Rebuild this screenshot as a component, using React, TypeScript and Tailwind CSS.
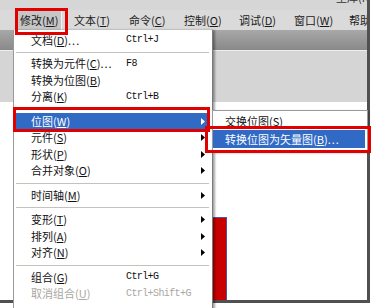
type Entry = {
  sep?: number;
  label?: string;
  k?: string;
  tail?: string;
  shortcut?: string;
  arrow?: boolean;
  active?: boolean;
  disabled?: boolean;
};

const menuItems: Entry[] = [
  { label: "文档", k: "D", tail: "...", shortcut: "Ctrl+J" },
  { sep: 7 },
  { label: "转换为元件", k: "C", tail: "...", shortcut: "F8" },
  { label: "转换为位图", k: "B" },
  { label: "分离", k: "K", shortcut: "Ctrl+B" },
  { sep: 8 },
  { label: "位图", k: "W", arrow: true, active: true },
  { label: "元件", k: "S", arrow: true },
  { label: "形状", k: "P", arrow: true },
  { label: "合并对象", k: "O", arrow: true },
  { sep: 8 },
  { label: "时间轴", k: "M", arrow: true },
  { sep: 8 },
  { label: "变形", k: "T", arrow: true },
  { label: "排列", k: "A", arrow: true },
  { label: "对齐", k: "N", arrow: true },
  { sep: 8 },
  { label: "组合", k: "G", shortcut: "Ctrl+G" },
  { label: "取消组合", k: "U", shortcut: "Ctrl+Shift+G", disabled: true },
];

const menuBar = [
  ["视图", "V"],
  ["修改", "M"],
  ["文本", "T"],
  ["命令", "C"],
  ["控制", "O"],
  ["调试", "D"],
  ["窗口", "W"],
  ["帮助", ""],
];

const Label = ({ label, k, tail }: { label: string; k?: string; tail?: string }) => (
  <span className="whitespace-nowrap">
    {label}
    {k && (
      <>
        (<span className="underline underline-offset-[1px]">{k}</span>)
      </>
    )}
    {tail && <span className="tracking-[1px]">{tail}</span>}
  </span>
);

const Arrow = ({ white }: { white?: boolean }) => (
  <svg width="4" height="7" viewBox="0 0 4 7" className="shrink-0">
    <polygon points="0,0 4,3.5 0,7" fill={white ? "#fff" : "#000"} />
  </svg>
);

const App = () => {
  return (
    <div className="w-[374px] h-[308px] bg-white overflow-hidden relative font-['Noto_Sans_CJK_SC',sans-serif] text-[11px] leading-none text-[#111]">
      <div className="w-[370px] h-[303px] border-r-[3px] border-b-[3px] border-[#505050] flex flex-col overflow-hidden">
        {/* top strip */}
        <div className="h-[10px] bg-[#d6d6d6] flex shrink-0 overflow-hidden">
          <div className="ml-[326px] w-px bg-[#8a8a8a]" />
          <span className="ml-[10px] -mt-[8px] text-[#333] whitespace-nowrap">型库(K)</span>
        </div>

        {/* menu bar */}
        <div className="h-[20px] bg-[#dadada] flex items-center pl-[19px] shrink-0 text-[#1a1a1a] overflow-hidden whitespace-nowrap">
          {menuBar.map(([t, k], i) => (
            <div key={t} className={`w-[55px] shrink-0 ${i === 0 ? "-ml-[55px]" : ""}`}>
              {t === "修改" ? (
                <span className="-ml-[3px] px-[3px] py-[3px] bg-[#c6c6c6] border border-t-[#8c8c8c] border-l-[#8c8c8c] border-b-[#f0f0f0] border-r-[#f0f0f0]">
                  <Label label={t} k={k} />
                </span>
              ) : (
                <Label label={t} k={k || undefined} />
              )}
            </div>
          ))}
        </div>

        {/* toolbar band */}
        <div className="h-[20px] bg-linear-to-b from-[#a8a8a8] to-[#898989] shrink-0" />

        {/* property panel */}
        <div className="h-[52px] bg-[#d5d5d5] border-t border-[#ededed] shrink-0" />

        {/* stage */}
        <div className="flex-1 bg-white flex flex-col">
          <div className="ml-[212px] mt-[115px] w-[15px] flex-1 bg-[#c80000] border-t border-r border-[#4a55a8]" />
        </div>
      </div>

      {/* modify dropdown */}
      <div className="absolute left-[13px] top-[30px] w-[200px] h-[280px] bg-white border-l border-[#9a9a9a] border-r border-r-[#7a7a7a] shadow-[2px_0_2px_rgba(0,0,0,0.35)] pt-[2px]">
        {menuItems.map((it, i) =>
          it.sep ? (
            <div key={i} className="flex items-center" style={{ height: it.sep }}>
              <div className="ml-[2px] mr-[3px] flex-1 h-px bg-[#c4c2bc]" />
            </div>
          ) : (
            <div
              key={i}
              className={`h-[16.5px] ml-[2px] mr-[3px] pl-[15px] pr-[4px] flex items-center ${
                it.active ? "bg-[#316ac5] text-white" : ""
              } ${it.disabled ? "text-[#a9a7a0]" : ""}`}
            >
              <div className="w-[95px] shrink-0">
                <Label label={it.label!} k={it.k} tail={it.tail} />
              </div>
              {it.shortcut && (
                <span className="font-['Liberation_Mono',monospace] text-[10px] tracking-[-0.6px] whitespace-nowrap">
                  {it.shortcut}
                </span>
              )}
              {it.arrow && (
                <div className="ml-auto">
                  <Arrow white={it.active} />
                </div>
              )}
            </div>
          )
        )}
      </div>

      {/* bitmap submenu */}
      <div className="absolute left-[212px] top-[110px] w-[156px] bg-white border border-[#9a9a9a] shadow-[1px_1px_2px_rgba(0,0,0,0.3)] py-[1px] pb-[3px]">
        <div className="h-[18px] pl-[12px] flex items-center">
          <Label label="交换位图" k="S" />
        </div>
        <div className="h-[18px] pl-[12px] mr-[2px] flex items-center bg-[#316ac5] text-white">
          <Label label="转换位图为矢量图" k="B" tail="..." />
        </div>
      </div>

      {/* red annotation boxes */}
      <div className="absolute left-[15px] top-[8px] w-[53px] h-[27px] border-[3px] border-[#e00000]" />
      <div className="absolute left-[13px] top-[107px] w-[197px] h-[25px] border-[3px] border-[#e00000]" />
      <div className="absolute left-[205px] top-[126px] w-[166px] h-[27px] border-[3px] border-[#e00000]" />
    </div>
  );
};

export default App;
